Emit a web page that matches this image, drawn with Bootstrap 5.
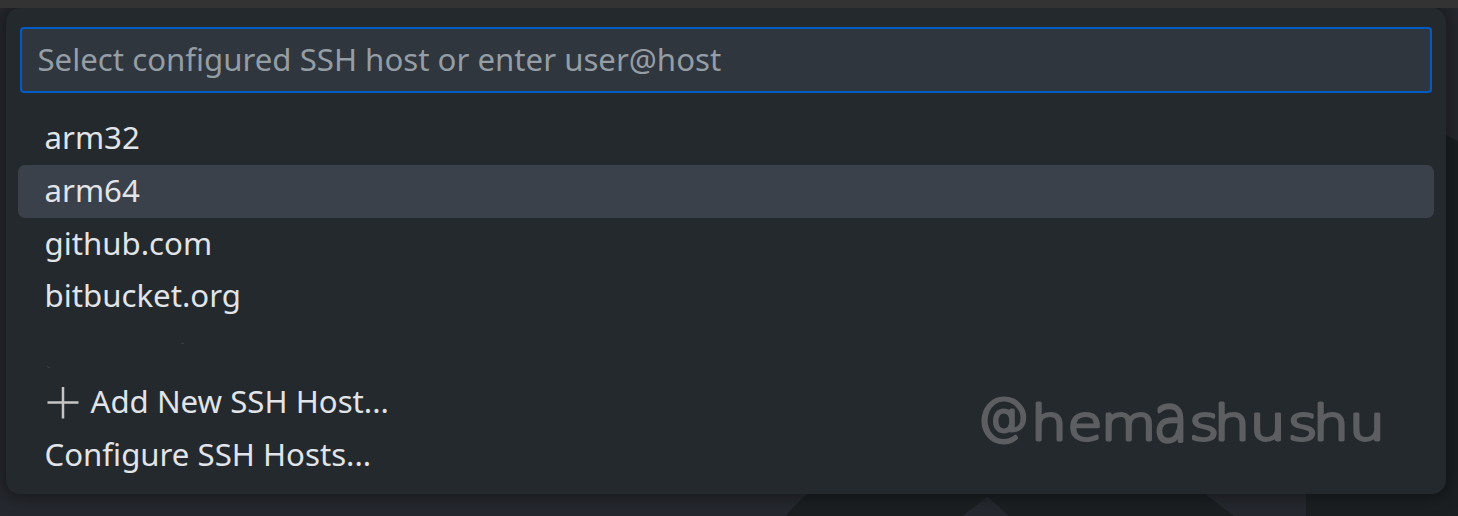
<!DOCTYPE html>
<html lang="en">
<head>
<meta charset="utf-8">
<title>Select SSH host</title>
<link rel="stylesheet" href="https://cdn.jsdelivr.net/npm/bootstrap@5.3.0/dist/css/bootstrap.min.css">
<style>
body { height: 516px; background: #25282e; font-family: "Noto Sans", sans-serif; font-size: 31.2px; line-height: 52.8px; color: #e1e4e8; }
.backdrop { z-index: 0; }
.titlebar { height: 8px; background: #333; z-index: 2; }
.quick-pick { z-index: 1; margin: 0 12px 0 6px; height: 486px; padding: 19px 12px 0; border-radius: 14px; background: #24292d; box-shadow: 0 0 16px 4px rgba(0,0,0,.36); }
.quick-input { margin: 0 2px 19px; width: calc(100% - 4px); height: 66px; padding: 0 15.5px 3px; border: 2px solid #005cc5; border-radius: 4px; background: #2f363d; color: #e1e4e8; font-size: 31.2px; }
.quick-input::placeholder { color: #959da5; opacity: 1; }
.quick-input:focus { outline: 0; }
.host-row { height: 52.8px; padding: 0 26.5px; border-radius: 7px; line-height: 51.4px; }
.host-row.selected { background: #3a414a; }
.watermark { right: 58px; bottom: 30px; }
</style>
<script src="https://cdn.jsdelivr.net/npm/bootstrap@5.3.0/dist/js/bootstrap.bundle.min.js"></script>
</head>
<body class="position-relative overflow-hidden">
<svg class="backdrop position-absolute top-0 start-0" width="1458" height="516" aria-hidden="true">
  <path fill="#1b1f22" d="M1446 135L1458 141V516H1306V480H1187L1234 516H1009L987.700 496.500L962 516H786Q788 512 807 494L820 480H1306V300L1446 220Z"/>
  <path fill="#25282e" d="M1187 480H1306V516H1234Z"/>
</svg>
<div class="titlebar position-relative"></div>
<main class="quick-pick position-relative">
  <input class="quick-input d-block" type="text" placeholder="Select configured SSH host or enter user@host">
  <div class="d-flex flex-column">
    <div class="host-row">arm32</div>
    <div class="host-row selected">arm64</div>
    <div class="host-row">github.com</div>
    <div class="host-row">bitbucket.org</div>
    <div class="host-row d-flex"><svg width="150" height="53" aria-hidden="true"><path stroke="#3d3b40" d="M136 20.500h3M2 43.500h1M3 44.500h2"/></svg></div>
    <div class="host-row d-flex align-items-start"><svg class="me-2 mt-2" width="38" height="38" viewBox="0 0 38 38" aria-hidden="true"><path d="M2.500 18.500h31M18 3v31.500" stroke="#c5c5c5" stroke-width="2.500"/></svg><span>Add New SSH Host...</span></div>
    <div class="host-row">Configure SSH Hosts...</div>
  </div>
  <svg class="watermark position-absolute" width="422" height="94" viewBox="-10 -20 422 94" fill="#5c5e61" stroke="#5c5e61" stroke-width="3" stroke-linejoin="round" stroke-linecap="round" font-family="DejaVu Sans" font-weight="200" font-size="48">
    <text transform="translate(1.500 44) scale(1.070 1.040)">@</text>
    <text transform="translate(0 50) scale(1.180 1)" x="46.600 77.600 106">hem</text>
    <text transform="translate(177.500 51) scale(1.180 1.330)" stroke-width="2.700">a</text>
    <text transform="translate(0 50) scale(1.180 1)" x="181 201.700 232 264.400 285.600 316">shushu</text>
  </svg>
</main>
</body>
</html>
